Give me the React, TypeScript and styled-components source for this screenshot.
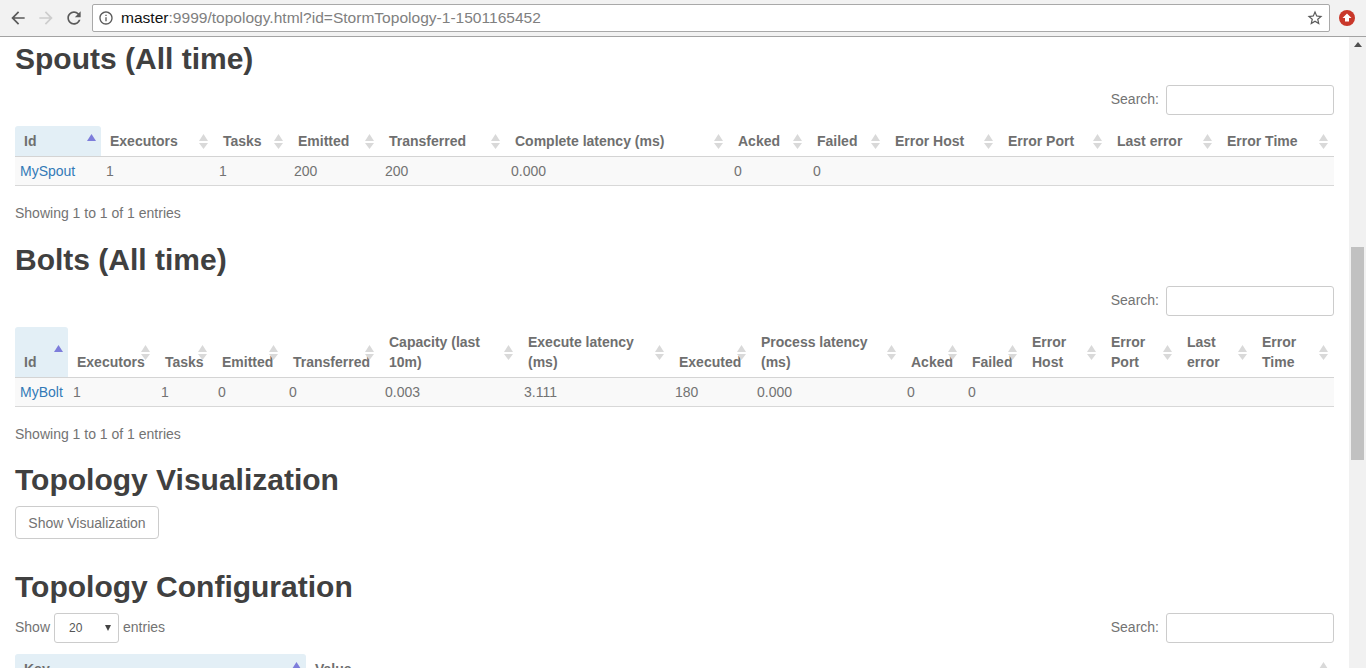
import React from "react";
import styled, { createGlobalStyle } from "styled-components";

const GlobalStyle = createGlobalStyle`
  html, body {
    margin: 0;
    padding: 0;
    background: #fff;
  }
  body {
    font-family: "Liberation Sans", Arial, sans-serif;
    font-size: 14px;
    line-height: 20px;
    color: #737373;
  }
`;

const Window = styled.div`
  width: 1366px;
  height: 668px;
  display: flex;
  flex-direction: column;
  overflow: hidden;
`;

const Toolbar = styled.div`
  height: 36px;
  flex: none;
  box-sizing: content-box;
  display: flex;
  align-items: center;
  padding-left: 8px;
  background: #f2f2f2;
  border-bottom: 1px solid #a3a3a3;
`;

const NavButton = styled.button<{ $color: string }>`
  width: 20px;
  height: 20px;
  padding: 0;
  margin-right: 8px;
  border: 0;
  background: none;
  color: ${(p) => p.$color};
  display: flex;
  svg {
    width: 20px;
    height: 20px;
    fill: currentColor;
  }
`;

const AddressBar = styled.div`
  width: 1238px;
  height: 28px;
  margin-top: -1px;
  box-sizing: border-box;
  display: flex;
  align-items: center;
  padding: 0 5px;
  background: #fff;
  border: 1px solid #a9a9a9;
  border-radius: 2px;
  svg {
    fill: #5a5a5a;
    flex: none;
  }
`;

const Url = styled.div`
  flex: 1;
  margin-left: 7px;
  font-size: 15.55px;
  color: #808080;
  white-space: nowrap;
  b {
    font-weight: normal;
    color: #111;
  }
`;

const ExtensionBadge = styled.div`
  width: 16px;
  height: 16px;
  margin-left: 9px;
  margin-top: -1px;
  border-radius: 50%;
  background: #c9382a;
  display: flex;
  svg {
    fill: #fff;
  }
`;

const Viewport = styled.div`
  flex: 1;
  min-height: 0;
  display: flex;
`;

const Page = styled.main`
  flex: 1;
  min-width: 0;
  padding: 5px 15px 0;
`;

const Heading = styled.h2<{ $top?: number }>`
  margin: ${(p) => p.$top ?? 20}px 0 10px;
  font-size: 30px;
  line-height: 33px;
  font-weight: bold;
  color: #404040;
`;

const Controls = styled.div<{ $between?: boolean }>`
  display: flex;
  align-items: center;
  justify-content: ${(p) => (p.$between ? "space-between" : "flex-end")};
  height: 30px;
  margin-bottom: 11px;
`;

const SearchLabel = styled.label`
  display: flex;
  align-items: center;
  gap: 7px;
`;

const LabelText = styled.span`
  margin-bottom: 2px;
`;

const SearchInput = styled.input`
  width: 168px;
  height: 30px;
  box-sizing: border-box;
  border: 1px solid #ccc;
  border-radius: 3px;
  background: #fff;
`;

const LengthLabel = styled.label`
  display: flex;
  align-items: center;
  gap: 4px;
`;

const LengthSelect = styled.div`
  width: 65px;
  height: 30px;
  box-sizing: border-box;
  display: flex;
  align-items: center;
  justify-content: space-between;
  padding: 0 7px 0 14px;
  font-size: 12px;
  color: #555;
  border: 1px solid #ccc;
  border-radius: 3px;
  background: #fff;
  &::after {
    content: "";
    border-left: 3px solid transparent;
    border-right: 3px solid transparent;
    border-top: 6px solid #444;
  }
`;

const Table = styled.table`
  width: 1319px;
  table-layout: fixed;
  border-collapse: collapse;
  border-spacing: 0;
`;

const Col = styled.col<{ $w: number }>`
  width: ${(p) => p.$w}px;
`;

const Th = styled.th<{ $active?: boolean }>`
  position: relative;
  box-sizing: border-box;
  padding: 5px 26px 5px 9px;
  text-align: left;
  vertical-align: bottom;
  font-weight: bold;
  color: #6f6f6f;
  background: ${(p) => (p.$active ? "#e3eff6" : "transparent")};
  border-radius: ${(p) => (p.$active ? "3px 3px 0 0" : "0")};
  border-bottom: 1px solid #d4d4d4;
`;

const SortMark = styled.svg<{ $active?: boolean }>`
  position: absolute;
  right: ${(p) => (p.$active ? 5 : 6)}px;
  top: 50%;
  width: 9px;
  height: 15px;
  margin-top: -7.5px;
  fill: ${(p) => (p.$active ? "#7d7ddb" : "#d9d9d9")};
`;

const Row = styled.tr`
  background: #f9f9f9;
`;

const Td = styled.td`
  padding: 4px 5px;
  height: 20px;
  border-bottom: 1px solid #d8d8d8;
  color: #737373;
`;

const Link = styled.a`
  color: #337ab7;
  text-decoration: none;
`;

const Info = styled.div`
  margin-top: 17px;
`;

const Button = styled.button`
  display: block;
  width: 144px;
  height: 33px;
  padding: 0;
  font: inherit;
  color: #737373;
  background: #fff;
  border: 1px solid #ccc;
  border-radius: 4px;
`;

const ScrollTrack = styled.aside`
  width: 17px;
  flex: none;
  display: flex;
  flex-direction: column;
  align-items: center;
  padding-top: 5px;
  box-sizing: border-box;
  background: #f1f1f1;
  &::before {
    content: "";
    border-left: 4px solid transparent;
    border-right: 4px solid transparent;
    border-bottom: 5px solid #505050;
    margin-bottom: 200px;
  }
`;

const ScrollThumb = styled.div`
  width: 13px;
  height: 213px;
  background: #c1c1c1;
`;

type Column = { label: string; w: number; active?: boolean };

const spoutColumns: Column[] = [
  { label: "Id", w: 86, active: true },
  { label: "Executors", w: 113 },
  { label: "Tasks", w: 75 },
  { label: "Emitted", w: 91 },
  { label: "Transferred", w: 126 },
  { label: "Complete latency (ms)", w: 223 },
  { label: "Acked", w: 79 },
  { label: "Failed", w: 78 },
  { label: "Error Host", w: 113 },
  { label: "Error Port", w: 109 },
  { label: "Last error", w: 110 },
  { label: "Error Time", w: 116 },
];

const boltColumns: Column[] = [
  { label: "Id", w: 53, active: true },
  { label: "Executors", w: 88 },
  { label: "Tasks", w: 57 },
  { label: "Emitted", w: 71 },
  { label: "Transferred", w: 96 },
  { label: "Capacity (last 10m)", w: 139 },
  { label: "Execute latency (ms)", w: 151 },
  { label: "Executed", w: 82 },
  { label: "Process latency (ms)", w: 150 },
  { label: "Acked", w: 61 },
  { label: "Failed", w: 60 },
  { label: "Error Host", w: 79 },
  { label: "Error Port", w: 76 },
  { label: "Last error", w: 75 },
  { label: "Error Time", w: 81 },
];

const configColumns: Column[] = [
  { label: "Key", w: 291, active: true },
  { label: "Value", w: 1028 },
];

function SortIcon({ active }: { active?: boolean }) {
  return (
    <SortMark $active={active} viewBox="0 0 9 15">
      <path d="M4.5 0 L9 7 L0 7 Z" />
      {!active && <path d="M0 9 L9 9 L4.5 15 Z" />}
    </SortMark>
  );
}

function DataTable({ columns, cells }: { columns: Column[]; cells?: string[] }) {
  return (
    <Table>
      <colgroup>
        {columns.map((c) => (
          <Col key={c.label} $w={c.w} />
        ))}
      </colgroup>
      <thead>
        <tr>
          {columns.map((c) => (
            <Th key={c.label} $active={c.active}>
              {c.label}
              <SortIcon active={c.active} />
            </Th>
          ))}
        </tr>
      </thead>
      {cells && (
        <tbody>
          <Row>
            {columns.map((c, i) => (
              <Td key={c.label}>{i === 0 ? <Link href="#">{cells[i]}</Link> : cells[i]}</Td>
            ))}
          </Row>
        </tbody>
      )}
    </Table>
  );
}

function Search() {
  return (
    <SearchLabel>
      <LabelText>Search:</LabelText>
      <SearchInput type="text" />
    </SearchLabel>
  );
}

export default function App() {
  return (
    <Window>
      <GlobalStyle />
      <Toolbar>
        <NavButton $color="#5a5a5a">
          <svg viewBox="0 0 24 24">
            <path d="M20 11H7.83l5.59-5.59L12 4l-8 8 8 8 1.41-1.41L7.83 13H20v-2z" />
          </svg>
        </NavButton>
        <NavButton $color="#cdcdcd">
          <svg viewBox="0 0 24 24">
            <path d="M12 4l-1.41 1.41L16.17 11H4v2h12.17l-5.58 5.59L12 20l8-8z" />
          </svg>
        </NavButton>
        <NavButton $color="#5a5a5a">
          <svg viewBox="0 0 24 24">
            <path d="M17.65 6.35C16.2 4.9 14.21 4 12 4c-4.42 0-7.99 3.58-7.99 8s3.57 8 7.99 8c3.73 0 6.84-2.55 7.73-6h-2.08c-.82 2.33-3.04 4-5.65 4-3.31 0-6-2.69-6-6s2.69-6 6-6c1.66 0 3.14.69 4.22 1.78L13 11h7V4l-2.35 2.35z" />
          </svg>
        </NavButton>
        <AddressBar>
          <svg width="16" height="16" viewBox="0 0 24 24">
            <path d="M11 7h2v2h-2zm0 4h2v6h-2zm1-9C6.48 2 2 6.48 2 12s4.48 10 10 10 10-4.48 10-10S17.52 2 12 2zm0 18c-4.41 0-8-3.59-8-8s3.59-8 8-8 8 3.59 8 8-3.59 8-8 8z" />
          </svg>
          <Url>
            <b>master</b>:9999/topology.html?id=StormTopology-1-1501165452
          </Url>
          <svg width="18" height="18" viewBox="0 0 24 24">
            <path d="M22 9.24l-7.19-.62L12 2 9.19 8.63 2 9.24l5.46 4.73L5.82 21 12 17.27 18.18 21l-1.63-7.03L22 9.24zM12 15.4l-3.76 2.27 1-4.28-3.32-2.88 4.38-.38L12 6.1l1.71 4.04 4.38.38-3.32 2.88 1 4.28L12 15.4z" />
          </svg>
        </AddressBar>
        <ExtensionBadge>
          <svg width="16" height="16" viewBox="0 0 16 16">
            <path d="M8 3.5 L12.5 8 L10 8 L10 11.5 L6 11.5 L6 8 L3.5 8 Z" />
          </svg>
        </ExtensionBadge>
      </Toolbar>
      <Viewport>
        <Page>
          <Heading $top={0}>Spouts (All time)</Heading>
          <Controls>
            <Search />
          </Controls>
          <DataTable
            columns={spoutColumns}
            cells={["MySpout", "1", "1", "200", "200", "0.000", "0", "0", "", "", "", ""]}
          />
          <Info>Showing 1 to 1 of 1 entries</Info>

          <Heading>Bolts (All time)</Heading>
          <Controls>
            <Search />
          </Controls>
          <DataTable
            columns={boltColumns}
            cells={["MyBolt", "1", "1", "0", "0", "0.003", "3.111", "180", "0.000", "0", "0", "", "", "", ""]}
          />
          <Info>Showing 1 to 1 of 1 entries</Info>

          <Heading $top={19}>Topology Visualization</Heading>
          <Button type="button">Show Visualization</Button>

          <Heading $top={31}>Topology Configuration</Heading>
          <Controls $between>
            <LengthLabel>
              <LabelText>Show</LabelText>
              <LengthSelect>20</LengthSelect>
              <LabelText>entries</LabelText>
            </LengthLabel>
            <Search />
          </Controls>
          <DataTable columns={configColumns} />
        </Page>
        <ScrollTrack>
          <ScrollThumb />
        </ScrollTrack>
      </Viewport>
    </Window>
  );
}
